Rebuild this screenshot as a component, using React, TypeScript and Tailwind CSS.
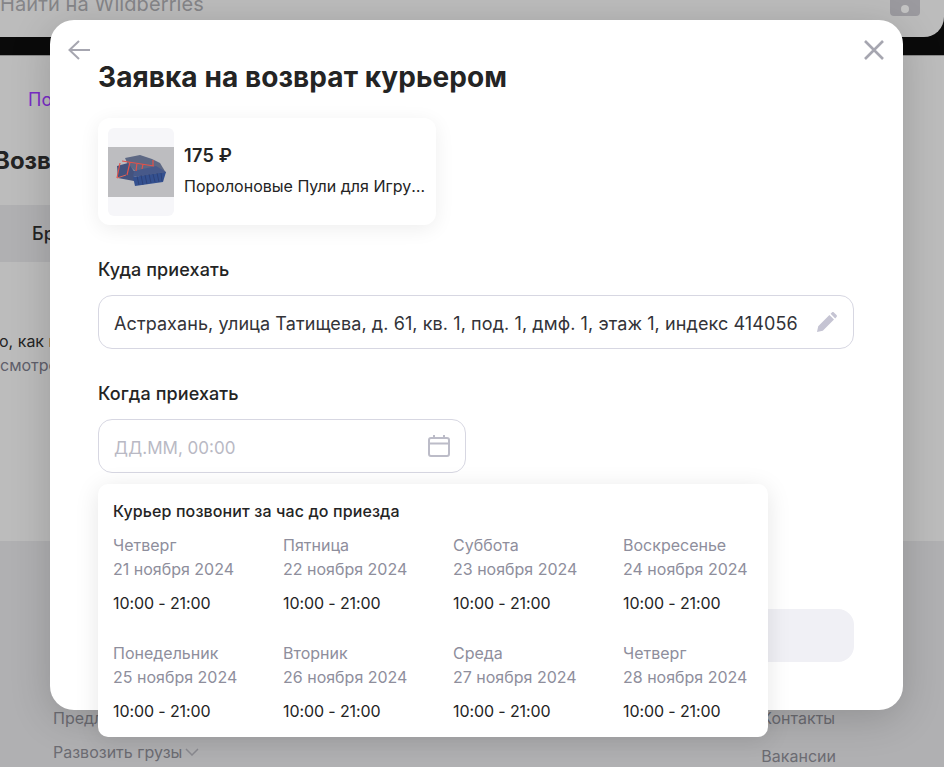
import React from "react";

const days = [
  ["Четверг", "21 ноября 2024"],
  ["Пятница", "22 ноября 2024"],
  ["Суббота", "23 ноября 2024"],
  ["Воскресенье", "24 ноября 2024"],
  ["Понедельник", "25 ноября 2024"],
  ["Вторник", "26 ноября 2024"],
  ["Среда", "27 ноября 2024"],
  ["Четверг", "28 ноября 2024"],
];

function ProductPicture() {
  return (
    <svg viewBox="0 0 66 50" className="block w-[66px] h-[50px]">
      <rect width="66" height="50" fill="#bdbdc0" />
      <polygon points="17,11 32,8 44,12 52,16 58,26 34,30 20,18" fill="#5d6884" />
      <polygon points="9,19 20,16 26,24 26,34 10,31" fill="#43527e" />
      <polygon points="25,30 58,25 55,35 27,39" fill="#34508f" />
      <polygon points="26,24 48,19 58,25 25,30" fill="#47598a" />
      <path d="M29 29 L31 38 M33 28 L35 38 M37 28 L39 37 M41 27 L43 36 M45 27 L47 35 M49 26 L51 35 M53 26 L54 34" stroke="#26386a" strokeWidth="0.6" />
      <path d="M14 14 L46 19 M22 15 L19 28 M29 16 L28 24 M35 17 L34 22 M45 13 L45 19 M12 16 L9 31" stroke="#e2524a" strokeWidth="1.2" fill="none" />
      <path d="M9 31 L18 28" stroke="#d8645c" strokeWidth="1" />
    </svg>
  );
}

export default function App() {
  return (
    <div className="relative h-[767px] w-[944px] overflow-hidden bg-[#bcbcbc] font-['Inter','Noto_Sans',sans-serif] text-[#242424]">
      {/* Page behind the dialog */}
      <header className="h-[56px] bg-[#0a0a0a] border-b border-[#8a8a8a]">
        <div className="flex h-[37px] items-end justify-between rounded-br-[20px] bg-[#bcbcbc] pr-[24px]">
          <span className="mb-[21px] text-[20px] leading-[24px] tracking-[0.1px] text-[#858588]">Найти на Wildberries</span>
          <div className="mb-[21px] flex h-[16px] w-[30px] items-end justify-center rounded-b-[4px] bg-[#9b9a9f] pb-[3px]">
            <div className="h-[8px] w-[8px] rounded-full bg-[#c4c4c4]" />
          </div>
        </div>
      </header>
      <main className="h-[485px] pt-[32px]">
        <p className="ml-[28px] text-[18px] leading-[24px] text-[#7a2cc8]">Пол</p>
        <h2 className="-ml-[6px] mt-[33px] text-[24px] font-bold leading-[32px] text-[#242424]">Возв</h2>
        <div className="mt-[28px] flex h-[57px] w-[400px] items-center bg-[#b0b0b2] pl-[32px] text-[18px] font-medium">Бр</div>
        <p className="-ml-[1px] mt-[67px] text-[16px] leading-[24px]">о, как п</p>
        <p className="text-[16px] leading-[24px] text-[#5f5f6b]">смотре</p>
      </main>
      <footer className="flex h-[226px] justify-between bg-[#b0b0b2] pl-[53px] pr-[108px] pt-[165px] text-[16px] leading-[24px] text-[#6c6c72]">
        <div className="flex flex-col gap-[10px]">
          <span>Предложения</span>
          <span className="flex items-center gap-[3px]">
            Развозить грузы
            <svg viewBox="0 0 14 8" className="h-[8px] w-[14px]" fill="none" stroke="#8a8a90" strokeWidth="1.5"><path d="M1 1l6 6 6-6" /></svg>
          </span>
        </div>
        <div className="flex flex-col gap-[14px]">
          <span>Контакты</span>
          <span>Вакансии</span>
        </div>
      </footer>

      {/* Dialog */}
      <div className="absolute left-[50px] top-[20px] h-[690px] w-[853px] rounded-[24px] bg-white pl-[48px] pr-[49px] pt-[37px] shadow-[0_8px_40px_rgba(0,0,0,0.18)]">
        <button className="absolute left-[18px] top-[20px]" aria-label="Назад">
          <svg viewBox="0 0 22 20" className="block h-[20px] w-[22px]" fill="none" stroke="#a6a6b0" strokeWidth="2"><path d="M11 1l-9.5 9L11 19M1.5 10H22" /></svg>
        </button>
        <button className="absolute right-[19px] top-[20px]" aria-label="Закрыть">
          <svg viewBox="0 0 20 20" className="block h-[20px] w-[20px]" fill="none" stroke="#a6a6b0" strokeWidth="2.6"><path d="M1 1l18 18M19 1L1 19" /></svg>
        </button>

        <h1 className="text-[28px] font-bold leading-[40px] tracking-[0.08px] text-[#242424]">Заявка на возврат курьером</h1>

        <div className="mt-[21px] flex h-[107px] w-[338px] items-center gap-[10px] rounded-[12px] bg-white pl-[10px] shadow-[0_4px_20px_rgba(0,0,0,0.07)]">
          <div className="flex h-[88px] w-[66px] shrink-0 items-center overflow-hidden rounded-[6px] bg-[#f6f6f9]">
            <ProductPicture />
          </div>
          <div className="min-w-0 pb-[2px]">
            <div className="text-[18px] font-semibold leading-[24px] tracking-[0.3px]">175 ₽</div>
            <div className="mt-[6px] w-[242px] truncate text-[16px] leading-[24px]">Поролоновые Пули для Игрушечного Оружия</div>
          </div>
        </div>

        <h3 className="mt-[33px] text-[18px] font-medium leading-[24px] tracking-[0.1px]">Куда приехать</h3>
        <div className="mt-[13px] flex h-[54px] items-center justify-between rounded-[14px] border border-[#d7d7e2] pl-[15px] pr-[16px]">
          <span className="pt-[4px] text-[18px] leading-[24px] tracking-[0.09px] text-[#333338]">Астрахань, улица Татищева, д. 61, кв. 1, под. 1, дмф. 1, этаж 1, индекс 414056</span>
          <svg viewBox="0 0 20 20" className="h-[20px] w-[20px] shrink-0" fill="#c5c4d3"><path d="M0 20l1.2-5.8L12.4 3l4.6 4.6L5.8 18.8zM13.6 1.8l1.3-1.3c.6-.6 1.4-.6 2 0l2.6 2.6c.6.6.6 1.4 0 2l-1.3 1.3z" /></svg>
        </div>

        <h3 className="mt-[33px] text-[18px] font-medium leading-[24px] tracking-[0.1px]">Когда приехать</h3>
        <div className="relative mt-[13px]">
          <div className="flex h-[54px] w-[368px] items-center justify-between rounded-[14px] border border-[#d7d7e2] pl-[15px] pr-[15px]">
            <span className="pt-[4px] text-[17px] leading-[24px] text-[#b9b9c4]">ДД.ММ, 00:00</span>
            <svg viewBox="0 0 22 22" className="h-[22px] w-[22px]" fill="none" stroke="#bcbcc8" strokeWidth="2"><rect x="1" y="3" width="20" height="18" rx="2" /><path d="M1 8.5h20M6 0v4M16 0v4" /></svg>
          </div>
          <div className="absolute left-0 top-[65px] z-10 h-[253px] w-[670px] rounded-[10px] bg-white pl-[15px] pt-[15px] shadow-[0_4px_24px_rgba(0,0,0,0.1)]">
            <div className="text-[16px] font-medium leading-[24px] tracking-[0.12px] text-[#242424]">Курьер позвонит за час до приезда</div>
            <div className="mt-[10px] grid grid-cols-[repeat(4,170px)] gap-y-[25.5px]">
              {days.map(([d, date], i) => (
                <div key={i} className="text-[16px] leading-[24px]">
                  <div className="text-[#8e8e9c]">{d}</div>
                  <div className="text-[#8e8e9c]">{date}</div>
                  <div className="mt-[10px] tracking-[-0.1px] text-[#242424]">10:00 - 21:00</div>
                </div>
              ))}
            </div>
          </div>
        </div>

        <div className="mt-[136px] h-[53px] rounded-[16px] bg-[#f0f0f5]" />
      </div>
    </div>
  );
}
